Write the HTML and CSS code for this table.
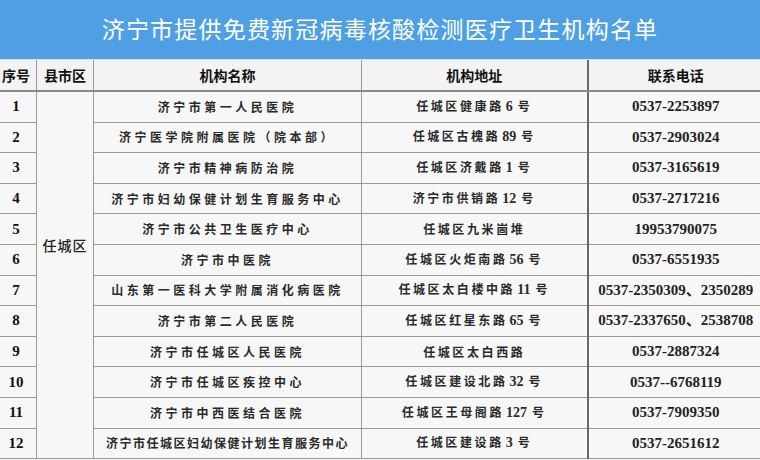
FILE: index.html
```html
<!DOCTYPE html>
<html lang="zh-CN">
<head>
<meta charset="utf-8">
<title>济宁市提供免费新冠病毒核酸检测医疗卫生机构名单</title>
<link rel="stylesheet" href="styles.css">
</head>
<body>
<div class="page">
  <header class="title-bar">
    <h1 class="title">济宁市提供免费新冠病毒核酸检测医疗卫生机构名单</h1>
  </header>
  <table class="list">
    <colgroup>
      <col class="c-no">
      <col class="c-area">
      <col class="c-name">
      <col class="c-addr">
      <col class="c-tel">
    </colgroup>
    <thead>
      <tr>
        <th>序号</th>
        <th>县市区</th>
        <th>机构名称</th>
        <th>机构地址</th>
        <th>联系电话</th>
      </tr>
    </thead>
    <tbody>
      <tr>
        <td class="no">1</td>
        <td class="area" rowspan="12"><span class="area-text">任城区</span></td>
        <td class="name">济宁市第一人民医院</td>
        <td class="addr">任城区健康路<b>6</b>号</td>
        <td class="tel">0537-2253897</td>
      </tr>
      <tr>
        <td class="no">2</td>
        <td class="name">济宁医学院附属医院（院本部）</td>
        <td class="addr">任城区古槐路<b>89</b>号</td>
        <td class="tel">0537-2903024</td>
      </tr>
      <tr>
        <td class="no">3</td>
        <td class="name">济宁市精神病防治院</td>
        <td class="addr">任城区济戴路<b>1</b>号</td>
        <td class="tel">0537-3165619</td>
      </tr>
      <tr>
        <td class="no">4</td>
        <td class="name">济宁市妇幼保健计划生育服务中心</td>
        <td class="addr">济宁市供销路<b>12</b>号</td>
        <td class="tel">0537-2717216</td>
      </tr>
      <tr>
        <td class="no">5</td>
        <td class="name">济宁市公共卫生医疗中心</td>
        <td class="addr">任城区九米崮堆</td>
        <td class="tel">19953790075</td>
      </tr>
      <tr>
        <td class="no">6</td>
        <td class="name">济宁市中医院</td>
        <td class="addr">任城区火炬南路<b>56</b>号</td>
        <td class="tel">0537-6551935</td>
      </tr>
      <tr>
        <td class="no">7</td>
        <td class="name">山东第一医科大学附属消化病医院</td>
        <td class="addr">任城区太白楼中路<b>11</b>号</td>
        <td class="tel">0537-2350309、2350289</td>
      </tr>
      <tr>
        <td class="no">8</td>
        <td class="name">济宁市第二人民医院</td>
        <td class="addr">任城区红星东路<b>65</b>号</td>
        <td class="tel">0537-2337650、2538708</td>
      </tr>
      <tr>
        <td class="no">9</td>
        <td class="name">济宁市任城区人民医院</td>
        <td class="addr">任城区太白西路</td>
        <td class="tel">0537-2887324</td>
      </tr>
      <tr>
        <td class="no">10</td>
        <td class="name">济宁市任城区疾控中心</td>
        <td class="addr">任城区建设北路<b>32</b>号</td>
        <td class="tel">0537--6768119</td>
      </tr>
      <tr>
        <td class="no">11</td>
        <td class="name">济宁市中西医结合医院</td>
        <td class="addr">任城区王母阁路<b>127</b>号</td>
        <td class="tel">0537-7909350</td>
      </tr>
      <tr>
        <td class="no">12</td>
        <td class="name tight">济宁市任城区妇幼保健计划生育服务中心</td>
        <td class="addr">任城区建设路<b>3</b>号</td>
        <td class="tel">0537-2651612</td>
      </tr>
    </tbody>
  </table>
</div>
</body>
</html>
```
FILE: styles.css
```css
html, body {
  margin: 0;
  padding: 0;
  background: #f6f6f6;
}
body {
  width: 760px;
  height: 460px;
  overflow: hidden;
  font-family: "Noto Sans CJK SC", "Liberation Sans", sans-serif;
  color: #222;
}
.page {
  width: 760px;
}
.title-bar {
  height: 59px;
  background: #4e9fe3;
  border-bottom: 1px solid #cfe3f3;
  display: flex;
  align-items: center;
  justify-content: center;
}
.title {
  margin: 0;
  padding-bottom: 2px;
  font-size: 23px;
  font-weight: 400;
  letter-spacing: 1.2px;
  color: #ffffff;
  line-height: 1;
}
.list {
  border-collapse: collapse;
  table-layout: fixed;
  width: 768px;
  margin-left: -5px;
  background: #f7f7f7;
}
.c-no { width: 41px; }
.c-area { width: 57px; }
.c-name { width: 268px; }
.c-addr { width: 226px; }
.c-tel { width: 176px; }

.list th {
  height: 30px;
  padding: 0;
  font-size: 14px;
  font-weight: 700;
  color: #111;
  background: #f3f3f3;
  border-left: 1px solid #999;
  border-right: 1px solid #999;
  border-bottom: 2px solid #8a8a8a;
  text-align: center;
  vertical-align: middle;
}
.list td {
  height: 29.6px;
  padding: 0;
  border: 1px solid #9a9a9a;
  text-align: center;
  vertical-align: middle;
  white-space: nowrap;
  line-height: 1;
}
.list td.addr,
.list th:nth-child(4) {
  border-right: 2px solid #6a6a6a;
}
.no {
  font-family: "Liberation Serif", serif;
  font-weight: 700;
  font-size: 15px;
  color: #111;
}
.area {
  vertical-align: top !important;
}
.area-text {
  display: block;
  padding-top: 146px;
  font-size: 14px;
  font-weight: 500;
  letter-spacing: 1px;
  color: #222;
}
.name {
  font-size: 12px;
  font-weight: 700;
  letter-spacing: 3.5px;
  color: #2a2a2a;
}
.name.tight {
  letter-spacing: 1.5px;
}
.addr {
  font-size: 12px;
  font-weight: 700;
  letter-spacing: 2.6px;
  color: #2a2a2a;
}
.addr b {
  font-family: "Liberation Serif", serif;
  font-size: 14px;
  letter-spacing: 0;
  margin: 0 5px 0 2px;
}
.tel {
  font-family: "Liberation Serif", "Noto Sans CJK SC", serif;
  font-weight: 700;
  font-size: 15px;
  color: #222;
}
```
